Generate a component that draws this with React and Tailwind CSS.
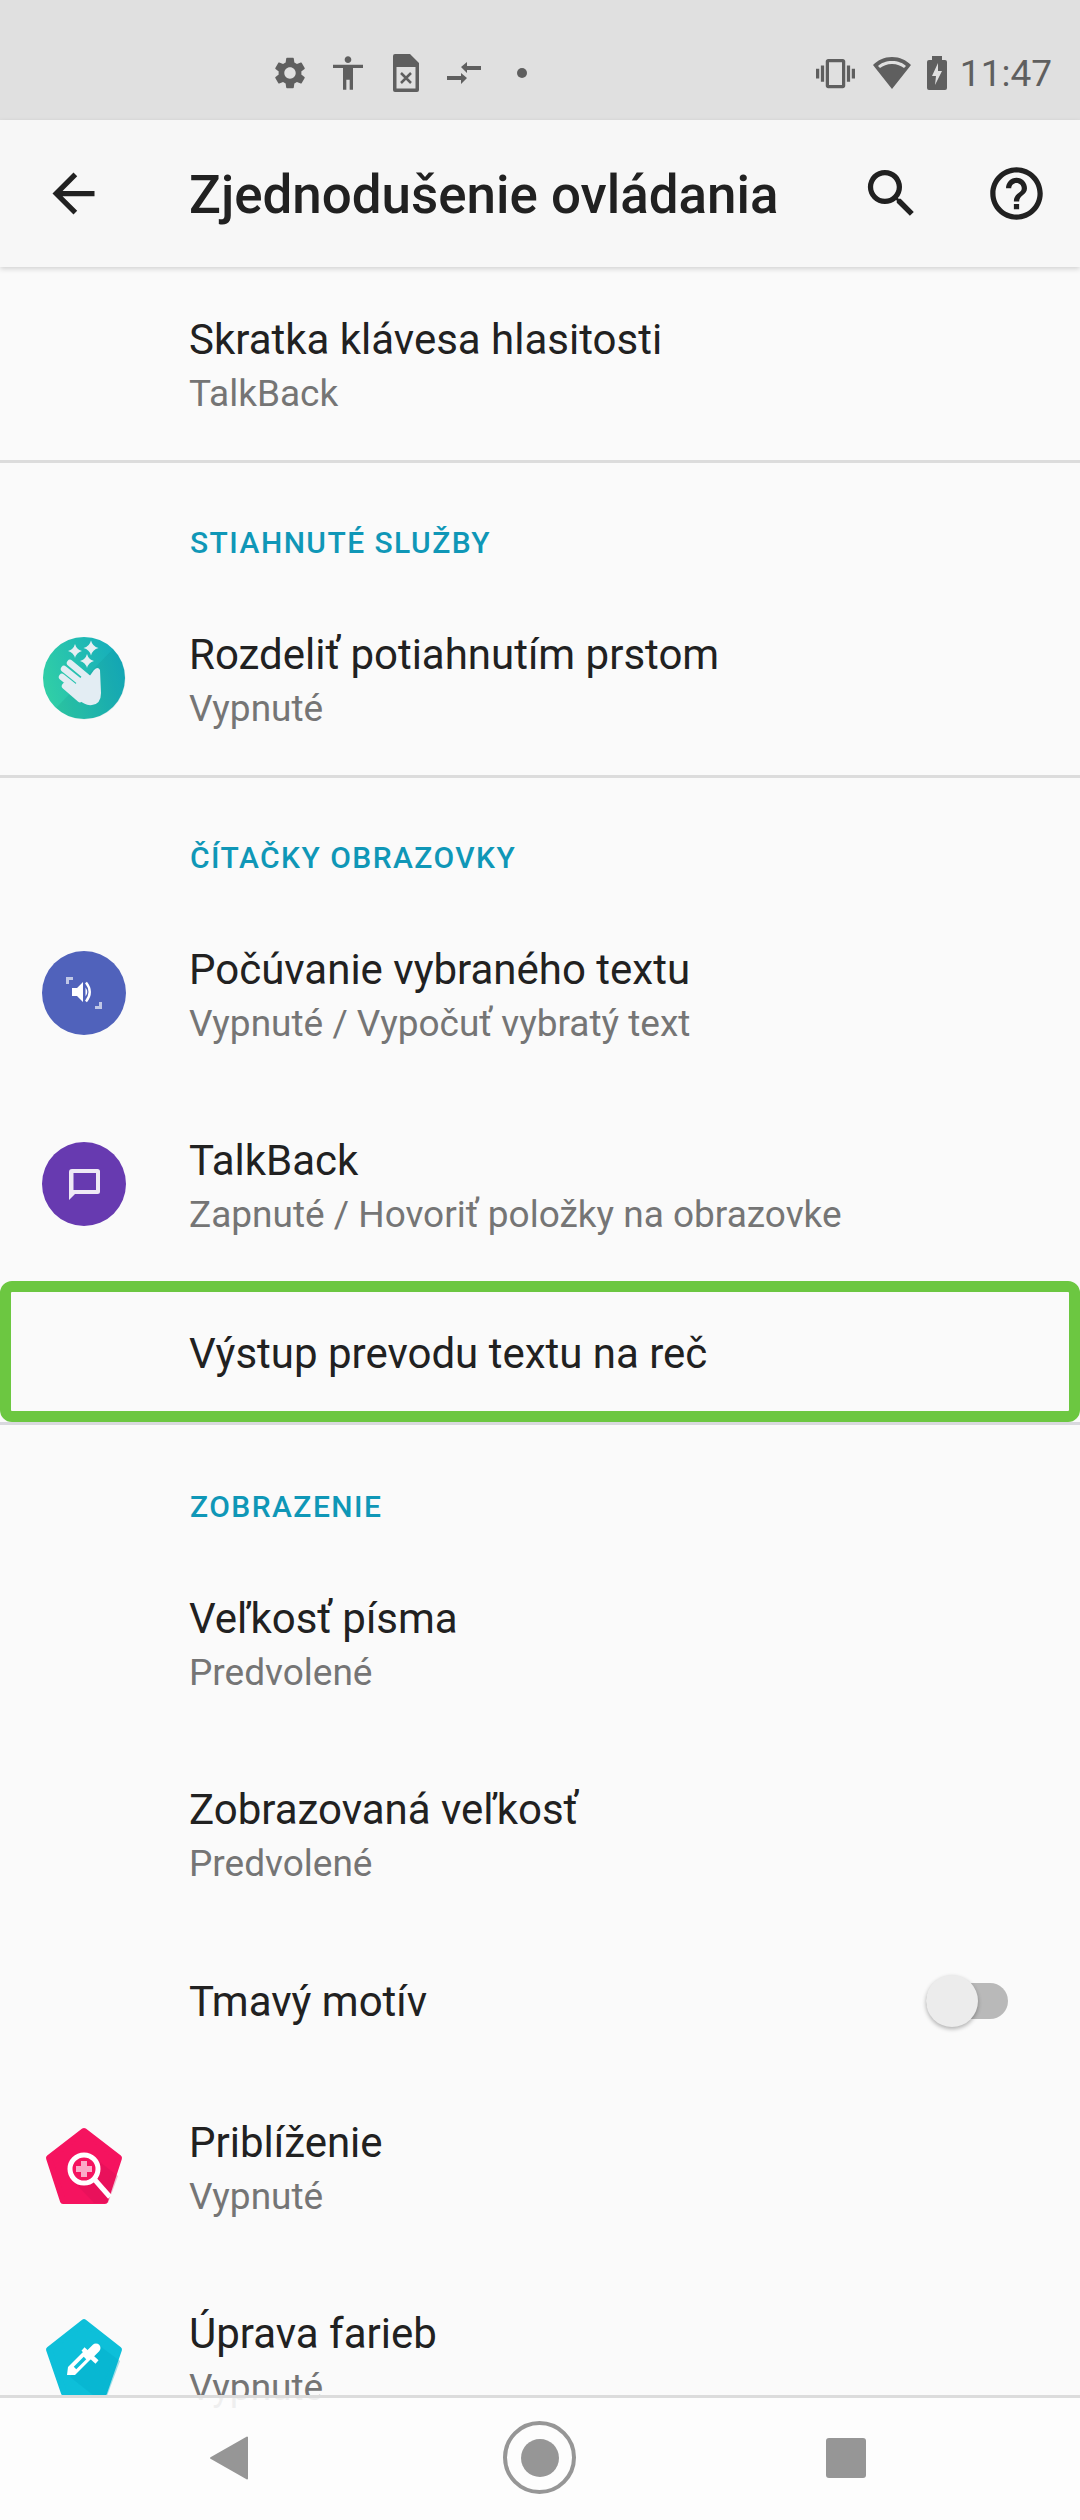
import {
  MdAccessibility,
  MdArrowBack,
  MdHelpOutline,
  MdSearch,
  MdSettings,
  MdVibration,
} from "react-icons/md";

const Sparkle = ({ x, y, r }) => (
  <path
    d={`M${x} ${y - r}Q${x + 1.5} ${y - 1.5} ${x + r} ${y}Q${x + 1.5} ${y + 1.5} ${x} ${y + r}Q${x - 1.5} ${y + 1.5} ${x - r} ${y}Q${x - 1.5} ${y - 1.5} ${x} ${y - r}Z`}
    fill="#e6eff3"
  />
);

const SwipeIcon = () => (
  <svg width="84" height="84" viewBox="0 0 84 84">
    <defs>
      <linearGradient id="swipe" x1="0" y1="0.6" x2="1" y2="0.3">
        <stop offset="0" stopColor="#31cfa6" />
        <stop offset="1" stopColor="#14abbd" />
      </linearGradient>
    </defs>
    <circle cx="42" cy="42" r="41" fill="url(#swipe)" />
    <path d="M71 13A41 41 0 0 1 14 72Z" fill="#0b6f6a" opacity="0.1" />
    <Sparkle x={33} y={15} r={7} />
    <Sparkle x={49} y={12} r={7.5} />
    <Sparkle x={45} y={25} r={7} />
    <g stroke="#e3edf3" strokeWidth="6.4" strokeLinecap="round">
      <path d="M28 27 46 42" />
      <path d="M22 33 42 49" />
      <path d="M20 41 40 57" />
      <path d="M23 50 38 63" />
    </g>
    <path
      d="M40 40 47 41 52 34Q56 30 58 34L59 57Q59 68 50 69 43 70 36 63L32 50Z"
      fill="#e3edf3"
    />
  </svg>
);

const SelectSpeakIcon = () => (
  <svg width="84" height="84" viewBox="0 0 84 84">
    <circle cx="42" cy="42" r="42" fill="#5062bb" />
    <path d="M24 33v-7h7v3h-4v4z" fill="#c0c7e6" />
    <path d="M60 51v7h-7v-3h4v-4z" fill="#c0c7e6" />
    <path d="M30 37h5l6-6v20l-6-6h-5z" fill="#fff" />
    <path d="M43.500 36.500q3.500 4.500 0 9z" fill="#fff" />
    <path
      d="M44 31.500q7.500 9.500 0 19"
      fill="none"
      stroke="#fff"
      strokeWidth="2.400"
    />
  </svg>
);

const TalkBackIcon = () => (
  <svg width="84" height="84" viewBox="0 0 84 84">
    <circle cx="42" cy="42" r="42" fill="#673ab0" />
    <path
      fillRule="evenodd"
      d="M30 27h25.500q2.500 0 2.500 2.500v20q0 2.500-2.500 2.500H33l-6 6V30q0-3 3-3zm1.500 4v17h22.500V31z"
      fill="#efe9f5"
    />
  </svg>
);

const MagnifyIcon = () => (
  <svg width="84" height="84" viewBox="0 0 84 84">
    <path
      d="M42 7 77 34 63 77H21L7 34Z"
      fill="#f5135f"
      stroke="#f5135f"
      strokeWidth="6"
      strokeLinejoin="round"
    />
    <path d="M54 35 76 52 66 79H52L32 58Z" fill="#c90d50" opacity="0.25" />
    <circle cx="42" cy="45" r="14" fill="#f5135f" stroke="#fff" strokeWidth="5" />
    <path d="M53 56 68 73" stroke="#fff" strokeWidth="5" />
    <path d="M42 37v16M34 45h16" stroke="#fbaac8" strokeWidth="6" />
  </svg>
);

const DropperIcon = () => (
  <svg width="84" height="84" viewBox="0 0 84 84">
    <path
      d="M42 7 77 34.500 62 78H22L7 34.500Z"
      fill="#0dbfd9"
      stroke="#0dbfd9"
      strokeWidth="6"
      strokeLinejoin="round"
    />
    <path d="M54 28 78 46 65 81H52L28 62Z" fill="#00aac6" opacity="0.35" />
    <g transform="translate(0 3)">
      <path d="M25 57 26 49 42 33 49 41 33 57Z" fill="#fff" />
      <path d="M33 50 43 40" stroke="#0dbfd9" strokeWidth="3.500" />
      <path d="M41 31 55 44" stroke="#fff" strokeWidth="4.500" />
      <path d="M47 37 54 30" stroke="#fff" strokeWidth="9" strokeLinecap="round" />
    </g>
  </svg>
);

const Divider = () => <div className="h-[3px] bg-[#dcdcdc]" />;

const Header = ({ children, height }) => (
  <div className={`flex items-end pb-[23px] pl-[190px] ${height}`}>
    <span className="text-[30px] leading-[36px] font-medium tracking-[1.45px] text-[#0f97b7]">
      {children}
    </span>
  </div>
);

const Row = ({ icon, title, sub }) => (
  <div className="flex h-[191px] items-center">
    <div className="flex w-[189px] shrink-0 pb-[3px] pl-[42px]">{icon}</div>
    <div className="flex flex-col pt-[4px]">
      <span className="text-[42px] leading-[54px] text-[#212121]">{title}</span>
      <span className="text-[37px] leading-[54px] text-[#757575]">{sub}</span>
    </div>
  </div>
);

const App = () => {
  return (
    <div
      className="relative flex h-[2520px] w-[1080px] flex-col overflow-hidden bg-[#fafafa]"
      style={{ fontFamily: "Roboto, sans-serif" }}
    >
      {/* status bar */}
      <div className="flex h-[120px] shrink-0 items-center bg-[#e0e0e0] pt-[26px] pr-[28px] pl-[271px] text-[#5f5f5f]">
        <div className="flex items-center">
          <MdSettings size={38} />
          <MdAccessibility size={40} className="ml-[19px]" />
          <svg width="28" height="40" viewBox="0 0 28 40" className="ml-[24px]">
            <path
              fillRule="evenodd"
              d="M3 1h15l9 9v27q0 2-2 2H3q-2 0-2-2V3q0-2 2-2zm1.500 13v21.500h19V14z"
              fill="currentColor"
            />
            <path d="M9 20l10 10M19 20 9 30" stroke="currentColor" strokeWidth="2.500" />
          </svg>
          <svg width="36" height="24" viewBox="0 0 36 24" className="ml-[26px]">
            <path d="M1 15h14v-3l6 5-6 6v-4H1zM35 9H21v3l-6-6 6-5v4h14z" fill="currentColor" />
          </svg>
          <span className="ml-[35px] h-[10px] w-[10px] rounded-full bg-[#5f5f5f]" />
        </div>
        <div className="ml-auto flex items-center">
          <MdVibration size={39} />
          <svg width="40" height="34" viewBox="0 0 40 34" className="ml-[17px]">
            <path
              fillRule="evenodd"
              d="M20 1C12 1 6 4 1 9l19 24L39 9C34 4 28 1 20 1zm0 4c6 0 11 2 14 5l-2 2c-3-2-7-4-12-4S11 10 8 12l-2-2c3-3 8-5 14-5z"
              fill="currentColor"
            />
          </svg>
          <svg width="20" height="34" viewBox="0 0 20 34" className="ml-[15px]">
            <path d="M5 4V0h10v4h3q2 0 2 2v26q0 2-2 2H2q-2 0-2-2V6q0-2 2-2z" fill="currentColor" />
            <path d="M11 7 5 20h4l-1 9 7-14h-4z" fill="#e0e0e0" />
          </svg>
          <span className="ml-[13px] text-[37px] leading-none">11:47</span>
        </div>
      </div>

      {/* app bar */}
      <div className="relative z-10 flex h-[147px] shrink-0 items-center bg-[#f7f7f7] pr-[32px] pl-[42px] shadow-[0_2px_5px_rgba(0,0,0,0.16)]">
        <MdArrowBack size={63} className="shrink-0 text-[#212121]" />
        <span className="ml-[84px] pt-[3px] text-[52.9px] leading-none font-medium text-[#212121]">
          Zjednodušenie ovládania
        </span>
        <MdSearch size={63} className="ml-auto text-[#212121]" />
        <MdHelpOutline size={63} className="ml-[62px] text-[#212121]" />
      </div>

      {/* list */}
      <div className="mt-[2px] flex flex-col">
        <Row title="Skratka klávesa hlasitosti" sub="TalkBack" />
        <Divider />
        <Header height="h-[121px]">STIAHNUTÉ SLUŽBY</Header>
        <Row icon={<SwipeIcon />} title="Rozdeliť potiahnutím prstom" sub="Vypnuté" />
        <Divider />
        <Header height="h-[121px]">ČÍTAČKY OBRAZOVKY</Header>
        <Row
          icon={<SelectSpeakIcon />}
          title="Počúvanie vybraného textu"
          sub="Vypnuté / Vypočuť vybratý text"
        />
        <Row
          icon={<TalkBackIcon />}
          title="TalkBack"
          sub="Zapnuté / Hovoriť položky na obrazovke"
        />
        <div className="flex h-[141px] items-center rounded-[12px] border-[11px] border-[#6cc741] pt-[5px] pl-[178px]">
          <span className="text-[42px] leading-[54px] text-[#212121]">
            Výstup prevodu textu na reč
          </span>
        </div>
        <div className="h-[3px] bg-[#d9d9de]" />
        <Header height="h-[123px]">ZOBRAZENIE</Header>
        <Row title="Veľkosť písma" sub="Predvolené" />
        <Row title="Zobrazovaná veľkosť" sub="Predvolené" />
        <div className="flex h-[142px] items-center pr-[72px] pl-[189px]">
          <span className="pt-[2px] text-[42px] leading-[54px] text-[#212121]">Tmavý motív</span>
          <div className="relative ml-auto h-[36px] w-[82px] rounded-full bg-[#b9b9b9]">
            <div className="absolute top-[-8px] left-0 h-[52px] w-[52px] rounded-full bg-[#ececec] shadow-[0_2px_4px_rgba(0,0,0,0.3)]" />
          </div>
        </div>
        <Row icon={<MagnifyIcon />} title="Priblíženie" sub="Vypnuté" />
        <Row icon={<DropperIcon />} title="Úprava farieb" sub="Vypnuté" />
      </div>

      {/* nav bar, translucent over the list */}
      <div className="absolute right-0 bottom-0 left-0 flex h-[125px] items-center border-t-[3px] border-[#dcdcdc] bg-[#fdfdfd]/90 pb-[3px] pl-[209px]">
        <svg width="40" height="44" viewBox="0 0 40 44">
          <path d="M38 1.500V42.500L2 22Z" fill="#969696" stroke="#969696" strokeWidth="2" strokeLinejoin="round" />
        </svg>
        <div className="ml-[254px] flex h-[73px] w-[73px] items-center justify-center rounded-full border-[4px] border-[#969696]">
          <div className="h-[38px] w-[38px] rounded-full bg-[#969696]" />
        </div>
        <div className="ml-[250px] h-[40px] w-[40px] rounded-[3px] bg-[#969696]" />
      </div>
    </div>
  );
};

export default App;
